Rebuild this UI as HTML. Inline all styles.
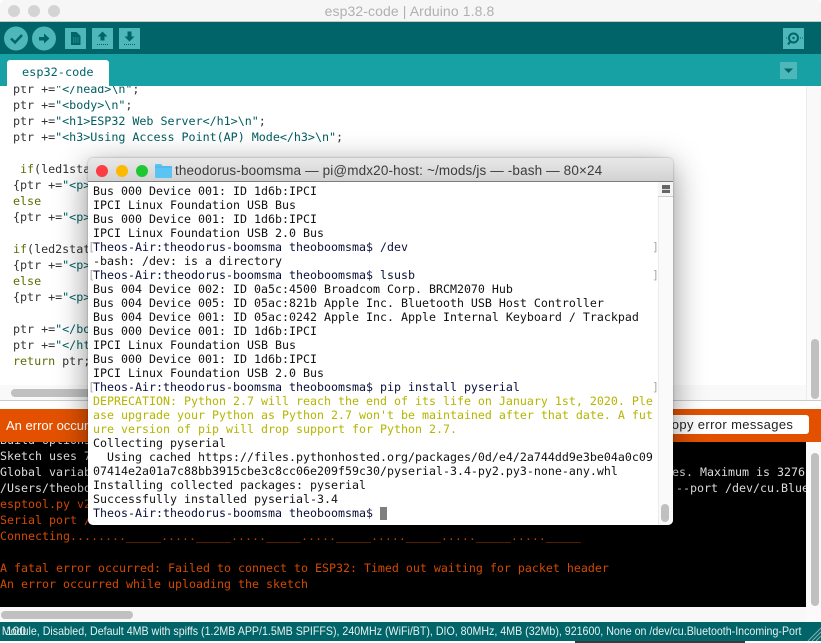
<!DOCTYPE html>
<html><head><meta charset="utf-8"><style>
html,body{margin:0;padding:0;width:821px;height:643px;overflow:hidden;background:#fff}
div,span{position:absolute}
.l{white-space:pre;left:0}
.ed{font:11.9px/16px "DejaVu Sans Mono","Liberation Mono",monospace;letter-spacing:-.03px;color:#333;height:16px;transform:scaleX(.985);transform-origin:0 0}
.ed b{font-weight:normal;color:#005c5f;position:static}
.ed i{font-style:normal;color:#5e6d03;position:static}
.co{font:11.63px/16px "DejaVu Sans Mono","Liberation Mono",monospace;color:#ddd;height:16px}
.or{color:#d34a00}
.te{font:11.63px/14px "DejaVu Sans Mono","Liberation Mono",monospace;color:#111;height:14px;left:5px}
.te.y{color:#b5b500}
.te.p{color:#0a0f38}
.br{font:11.6px/14px "DejaVu Sans Mono",monospace;color:#aaa;height:14px}
</style></head><body>
<div style="left:0;top:0;width:821px;height:643px;background:#fff;overflow:hidden">
 <!-- title -->
 <div style="left:0;top:0;width:821px;height:22px;background:#f6f6f6;border-radius:5px 5px 0 0;border-bottom:1px solid #c8c8c8;box-sizing:border-box"></div>
 <div style="left:8px;top:5px;width:12px;height:12px;border-radius:50%;background:#d4d4d4"></div>
 <div style="left:28px;top:5px;width:12px;height:12px;border-radius:50%;background:#d4d4d4"></div>
 <div style="left:48px;top:5px;width:12px;height:12px;border-radius:50%;background:#d4d4d4"></div>
 <div style="left:0;top:3px;width:819px;text-align:center;font:14px/17px 'Liberation Sans',sans-serif;letter-spacing:.1px;color:#b0b0b0">esp32-code | Arduino 1.8.8</div>
 <!-- toolbar -->
 <div style="left:0;top:22px;width:821px;height:32px;background:#006468"></div>
 <div style="left:0;top:54px;width:821px;height:32px;background:#17a1a5"></div>
 <svg style="position:absolute;left:0;top:22px" width="145" height="32" viewBox="0 22 145 32">
  <circle cx="16" cy="38.500" r="12" fill="#4db7ba"/><circle cx="44" cy="38.500" r="12" fill="#4db7ba"/>
  <path d="M11 38.500l4 4 7-7.500" fill="none" stroke="#006468" stroke-width="2.400"/>
  <path d="M39 37h5v-3.500l5.500 5-5.500 5V40.500h-5z" fill="#006468"/>
  <rect x="65" y="28" width="21" height="21" fill="#4db7ba"/><rect x="92" y="28" width="21" height="21" fill="#4db7ba"/><rect x="119" y="28" width="21" height="21" fill="#4db7ba"/>
  <path d="M71 32h5.500l4 4v9H71z" fill="#006468"/><path d="M73 38h6M73 40h6M73 42h6" stroke="#4db7ba" stroke-width=".8" stroke-dasharray="1 .8"/>
  <path d="M102.500 31.500l5 5h-3v4h-4v-4h-3z" fill="#006468"/><path d="M97 44.500h11" stroke="#006468" stroke-dasharray="1 1"/>
  <path d="M129.500 41.500l5-5h-3v-5h-4v5h-3z" fill="#006468"/><path d="M124 44.500h11" stroke="#006468" stroke-dasharray="1 1"/>
 </svg>
 <svg style="position:absolute;left:783px;top:28px" width="21" height="21" viewBox="0 0 21 21"><rect width="21" height="21" fill="#4db7ba"/><circle cx="10.500" cy="10" r="4.500" fill="none" stroke="#006468" stroke-width="2"/><circle cx="10.500" cy="10" r="1.200" fill="#006468"/><path d="M7 14l-2 2.500" stroke="#006468" stroke-width="2"/><path d="M3 10h1M17 10h3" stroke="#006468" stroke-dasharray="1 1"/></svg>
 <div style="left:7px;top:60px;width:102px;height:26px;background:#fff;border-radius:3px 3px 0 0"></div>
 <div style="left:22px;top:64px;font:11.9px/16px 'DejaVu Sans Mono',monospace;color:#006468;white-space:pre">esp32-code</div>
 <svg style="position:absolute;left:780px;top:62px" width="17" height="17"><rect width="17" height="17" fill="#4db7ba"/><path d="M4 6.500h9l-4.500 4.500z" fill="#006468"/></svg>

 <!-- editor -->
 <div style="left:0;top:86px;width:806px;height:306px;overflow:hidden">
  <div style="left:13px;top:-5px;width:800px;height:320px">
   <div class="l ed" style="top:0">ptr +=<b>"&lt;/head&gt;\n"</b>;</div>
   <div class="l ed" style="top:16px">ptr +=<b>"&lt;body&gt;\n"</b>;</div>
   <div class="l ed" style="top:32px">ptr +=<b>"&lt;h1&gt;ESP32 Web Server&lt;/h1&gt;\n"</b>;</div>
   <div class="l ed" style="top:48px">ptr +=<b>"&lt;h3&gt;Using Access Point(AP) Mode&lt;/h3&gt;\n"</b>;</div>
   <div class="l ed" style="top:80px;left:7px"><i>if</i>(led1stat)</div>
   <div class="l ed" style="top:96px">{ptr +=<b>"&lt;p&gt;</b></div>
   <div class="l ed" style="top:112px"><i>else</i></div>
   <div class="l ed" style="top:128px">{ptr +=<b>"&lt;p&gt;</b></div>
   <div class="l ed" style="top:160px"><i>if</i>(led2stat)</div>
   <div class="l ed" style="top:176px">{ptr +=<b>"&lt;p&gt;</b></div>
   <div class="l ed" style="top:192px"><i>else</i></div>
   <div class="l ed" style="top:208px">{ptr +=<b>"&lt;p&gt;</b></div>
   <div class="l ed" style="top:240px">ptr +=<b>"&lt;/body&gt;</b></div>
   <div class="l ed" style="top:256px">ptr +=<b>"&lt;/html&gt;</b></div>
   <div class="l ed" style="top:272px"><i>return</i> ptr;</div>
  </div>
 </div>
 <div style="left:806px;top:86px;width:15px;height:314px;background:#f9f9f9;border-left:1px solid #ececec;box-sizing:border-box"></div>
 <div style="left:811px;top:339px;width:8px;height:60px;background:#c0c0c0;border-radius:4px"></div>
 <div style="left:0;top:385px;width:806px;height:15px;background:#f9f9f9"></div>
 <div style="left:11px;top:389px;width:400px;height:8px;background:#c0c0c0;border-radius:4px"></div>
 <div style="left:0;top:400px;width:821px;height:9px;background:#fff;border-top:1px solid #ccc;box-sizing:border-box"></div>

 <!-- error bar -->
 <div style="left:0;top:409px;width:821px;height:33px;background:#e35100"></div>
 <div style="left:6px;top:417px;font:13px/17px 'Liberation Sans',sans-serif;color:#fff;white-space:pre">An error occurred</div>
 <div style="left:640px;top:415px;width:169px;height:19px;background:#fff;border-radius:3px"></div>
 <div style="left:662px;top:416px;font:13px/17px 'Liberation Sans',sans-serif;color:#222;white-space:pre;letter-spacing:.37px">Copy error messages</div>

 <!-- console -->
 <div style="left:0;top:442px;width:806px;height:165px;background:#000;overflow:hidden">
  <div class="l co" style="top:-10px">Build options</div>
  <div class="l co" style="top:6px">Sketch uses 7</div>
  <div class="l co" style="top:22px">Global variables</div>
  <div class="l co" style="top:22px;left:672px">es. Maximum is 3276</div>
  <div class="l co" style="top:38px">/Users/theoboomsma</div>
  <div class="l co" style="top:38px;left:676px">--port /dev/cu.Blue</div>
  <div class="l co or" style="top:54px">esptool.py v2.6</div>
  <div class="l co or" style="top:70px">Serial port /dev</div>
  <div class="l co or" style="top:86px">Connecting........_____....._____....._____....._____....._____....._____....._____</div>
  <div class="l co or" style="top:118px">A fatal error occurred: Failed to connect to ESP32: Timed out waiting for packet header</div>
  <div class="l co or" style="top:134px">An error occurred while uploading the sketch</div>
 </div>
 <div style="left:806px;top:442px;width:15px;height:180px;background:#fafafa"></div>
 <div style="left:811px;top:453px;width:8px;height:153px;background:#c0c0c0;border-radius:4px"></div>
 <div style="left:0;top:607px;width:806px;height:15px;background:#f8f8f8"></div>
 <div style="left:1px;top:611px;width:132px;height:8px;background:#c0c0c0;border-radius:4px"></div>

 <!-- status -->
 <div style="left:0;top:622px;width:821px;height:19px;background:#006468;overflow:hidden">
  <div style="right:20px;top:1px;font:12px/17px 'Liberation Sans',sans-serif;color:#e6f0f0;white-space:pre;transform:scaleX(.887);transform-origin:100% 0">Module, Disabled, Default 4MB with spiffs (1.2MB APP/1.5MB SPIFFS), 240MHz (WiFi/BT), DIO, 80MHz, 4MB (32Mb), 921600, None on /dev/cu.Bluetooth-Incoming-Port</div>
  <div style="left:6px;top:1px;font:12px/17px 'Liberation Sans',sans-serif;color:#e6f0f0;white-space:pre">100</div>
  <svg style="position:absolute;right:0;bottom:0" width="14" height="14"><path d="M14 1L1 14M14 5L5 14M14 9L9 14" stroke="#7fb4b6"/></svg>
 </div>
 <div style="left:575px;top:641px;width:170px;height:2px;background:#3a3a3a"></div>

 <!-- terminal -->
 <div style="left:88px;top:158px;width:585px;height:367px;background:#fff;border-radius:5px;box-shadow:0 8px 32px rgba(0,0,0,.45),0 0 2px rgba(0,0,0,.3);overflow:hidden">
  <div style="left:0;top:0;width:585px;height:24px;background:linear-gradient(#e8e8e8,#d2d2d2);border-bottom:1px solid #7c7c7c;box-sizing:border-box"></div>
  <div style="left:8px;top:7px;width:12px;height:12px;border-radius:50%;background:#fc3d44"></div>
  <div style="left:28px;top:7px;width:12px;height:12px;border-radius:50%;background:#fdb800"></div>
  <div style="left:48px;top:7px;width:12px;height:12px;border-radius:50%;background:#1ec832"></div>
  <svg style="position:absolute;left:67px;top:5px" width="17" height="15"><path d="M0 2Q0 1 1 1h5l1.500 2H16q1 0 1 1v10q0 1-1 1H1q-1 0-1-1z" fill="#5cc4f5"/><path d="M0 4h17" stroke="#3fa9e0" stroke-width=".7"/></svg>
  <div style="left:87px;top:5px;font:13.5px/16px 'Liberation Sans',sans-serif;color:#3c3c3c;white-space:pre;letter-spacing:.14px">theodorus-boomsma — pi@mdx20-host: ~/mods/js — -bash — 80×24</div>

  <div style="left:570px;top:24px;width:15px;height:343px;background:#fafafa;border-left:1px solid #ececec;box-sizing:border-box"></div>
  <div style="left:570px;top:24px;width:15px;height:15px;background:#f5f5f5;border-bottom:1px solid #ccc;box-sizing:border-box"></div>
  <div style="left:574px;top:27px;width:8px;height:8px;background:#666"></div>
  <div style="left:574px;top:30.500px;width:8px;height:1px;background:#ddd"></div>
  <div style="left:573px;top:346px;width:8px;height:18px;background:#c0c0c0;border-radius:4px"></div>

  <div class="br" style="left:0;top:82px">[</div><div class="br" style="left:0;top:110px">[</div><div class="br" style="left:0;top:222px">[</div>
  <div class="br" style="left:564px;top:82px">]</div><div class="br" style="left:564px;top:110px">]</div><div class="br" style="left:564px;top:222px">]</div>

  <div class="l te" style="top:26px">Bus 000 Device 001: ID 1d6b:IPCI</div>
  <div class="l te" style="top:40px">IPCI Linux Foundation USB Bus</div>
  <div class="l te" style="top:54px">Bus 000 Device 001: ID 1d6b:IPCI</div>
  <div class="l te" style="top:68px">IPCI Linux Foundation USB 2.0 Bus</div>
  <div class="l te p" style="top:82px">Theos-Air:theodorus-boomsma theoboomsma$ /dev</div>
  <div class="l te" style="top:96px">-bash: /dev: is a directory</div>
  <div class="l te p" style="top:110px">Theos-Air:theodorus-boomsma theoboomsma$ lsusb</div>
  <div class="l te" style="top:124px">Bus 004 Device 002: ID 0a5c:4500 Broadcom Corp. BRCM2070 Hub</div>
  <div class="l te" style="top:138px">Bus 004 Device 005: ID 05ac:821b Apple Inc. Bluetooth USB Host Controller</div>
  <div class="l te" style="top:152px">Bus 004 Device 001: ID 05ac:0242 Apple Inc. Apple Internal Keyboard / Trackpad</div>
  <div class="l te" style="top:166px">Bus 000 Device 001: ID 1d6b:IPCI</div>
  <div class="l te" style="top:180px">IPCI Linux Foundation USB Bus</div>
  <div class="l te" style="top:194px">Bus 000 Device 001: ID 1d6b:IPCI</div>
  <div class="l te" style="top:208px">IPCI Linux Foundation USB 2.0 Bus</div>
  <div class="l te p" style="top:222px">Theos-Air:theodorus-boomsma theoboomsma$ pip install pyserial</div>
  <div class="l te y" style="top:236px">DEPRECATION: Python 2.7 will reach the end of its life on January 1st, 2020. Ple</div>
  <div class="l te y" style="top:250px">ase upgrade your Python as Python 2.7 won't be maintained after that date. A fut</div>
  <div class="l te y" style="top:264px">ure version of pip will drop support for Python 2.7.</div>
  <div class="l te" style="top:278px">Collecting pyserial</div>
  <div class="l te" style="top:292px">  Using cached https://files.pythonhosted.org/packages/0d/e4/2a744dd9e3be04a0c09</div>
  <div class="l te" style="top:306px">07414e2a01a7c88bb3915cbe3c8cc06e209f59c30/pyserial-3.4-py2.py3-none-any.whl</div>
  <div class="l te" style="top:320px">Installing collected packages: pyserial</div>
  <div class="l te" style="top:334px">Successfully installed pyserial-3.4</div>
  <div class="l te p" style="top:348px">Theos-Air:theodorus-boomsma theoboomsma$</div>
  <div style="left:292px;top:349px;width:7px;height:13px;background:#7f7f7f"></div>
 </div>
</div>
</body></html>
